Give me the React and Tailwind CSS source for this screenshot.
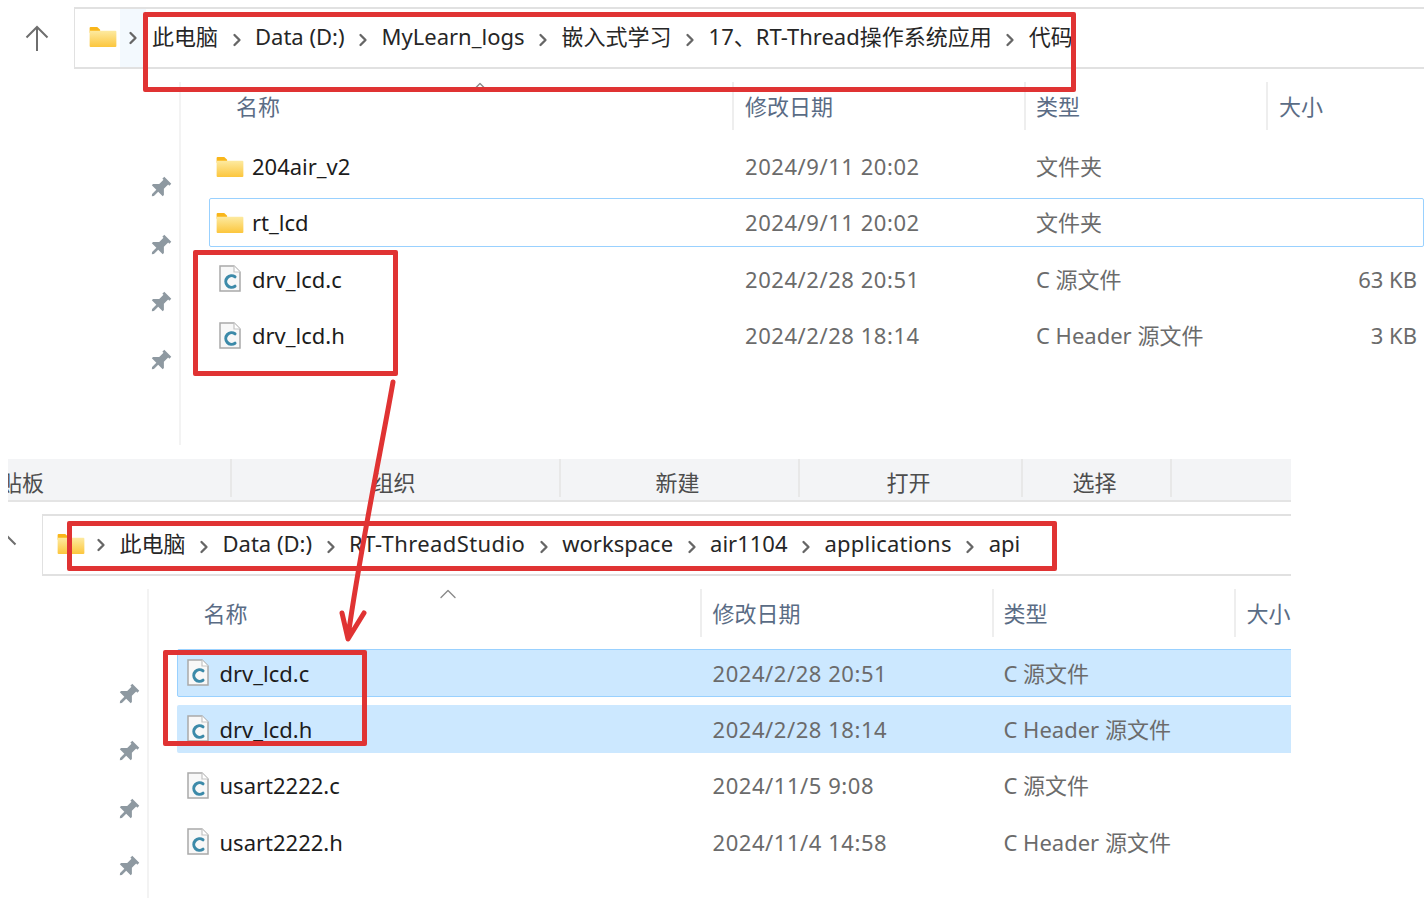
import { ChevronRight, ChevronUp } from "lucide-react";

const fontStack = `"Noto Sans", "Noto Sans CJK SC", sans-serif`;

const topCrumbs = ["此电脑", "Data (D:)", "MyLearn_logs", "嵌入式学习", "17、RT-Thread操作系统应用", "代码"];
const bottomCrumbs = ["此电脑", "Data (D:)", "RT-ThreadStudio", "workspace", "air1104", "applications", "api"];

const topRows = [
  { name: "204air_v2", date: "2024/9/11 20:02", type: "文件夹", kind: "folder" },
  { name: "rt_lcd", date: "2024/9/11 20:02", type: "文件夹", kind: "folder", focused: true },
  { name: "drv_lcd.c", date: "2024/2/28 20:51", type: "C 源文件", size: "63 KB", kind: "c" },
  { name: "drv_lcd.h", date: "2024/2/28 18:14", type: "C Header 源文件", size: "3 KB", kind: "c" },
];

const bottomRows = [
  { name: "drv_lcd.c", date: "2024/2/28 20:51", type: "C 源文件", kind: "c", selected: true, focused: true },
  { name: "drv_lcd.h", date: "2024/2/28 18:14", type: "C Header 源文件", kind: "c", selected: true },
  { name: "usart2222.c", date: "2024/11/5 9:08", type: "C 源文件", kind: "c" },
  { name: "usart2222.h", date: "2024/11/4 14:58", type: "C Header 源文件", kind: "c" },
];

function FolderIcon({ className }) {
  return (
    <svg className={className} viewBox="0 0 28 22" fill="none">
      <defs>
        <linearGradient id="folderFill" x1="0" y1="0" x2="0" y2="1">
          <stop offset="0" stopColor="#fdeaa0" />
          <stop offset="1" stopColor="#fcc63d" />
        </linearGradient>
      </defs>
      <path d="M0 2a1 1 0 011-1h7l3 3v3H0z" fill="#f9b61a" />
      <path d="M0 5h27a1 1 0 011 1v15a1 1 0 01-1 1H1a1 1 0 01-1-1z" fill="url(#folderFill)" />
    </svg>
  );
}

function CFileIcon() {
  return (
    <svg className="h-[27px] w-[22px] shrink-0" viewBox="0 0 22 27" fill="none">
      <path d="M1 1h14l6 6v19H1z" fill="#f8f8f8" stroke="#a9a9a9" strokeWidth="1.5" />
      <path d="M15 1v6h6" fill="#ffffff" stroke="#c4c4c4" strokeWidth="1.2" />
      <path d="M16 11.800a5.800 5.800 0 100 9.400" stroke="#3c8aa9" strokeWidth="3" strokeLinecap="round" />
    </svg>
  );
}

function PinIcon() {
  return (
    <svg className="h-[22px] w-[22px] overflow-visible" viewBox="0 0 20 20" fill="#8e99a1">
      <g transform="rotate(45 10 10)">
        <path d="M5.500 0h9v2.500H13V8l4 4v1.500h-5.800V19L10 20.500 8.800 19v-5.500H3V12l4-4V2.500H5.500z" />
      </g>
    </svg>
  );
}

function UpArrowIcon() {
  return (
    <svg className="h-[26px] w-6" viewBox="0 0 24 26" fill="none" stroke="#6e6e6e" strokeWidth="2">
      <path d="M12 2v24M1.500 12.500L12 2l10.500 10.500" />
    </svg>
  );
}

function Breadcrumbs({ crumbs }) {
  return (
    <div className="flex h-full items-center">
      {crumbs.map((crumb, i) => (
        <div key={crumb} className="flex items-center">
          {i > 0 && (
            <ChevronRight className="mx-[8.500px] mt-1 h-5 w-5 text-[#666666]" strokeWidth={2.8} />
          )}
          <span
            className={`mb-1 text-[#262626] ${crumb === "RT-ThreadStudio" ? "tracking-[0.4px]" : ""} ${
              crumb === "applications" ? "tracking-[0.2px]" : ""
            }`}
          >
            {crumb}
          </span>
        </div>
      ))}
    </div>
  );
}

function FileRow({ row }) {
  const tone = row.selected ? "bg-[#cce8ff]" : "";
  const edge = row.focused ? "border-[#99d1ff]" : "border-transparent";

  return (
    <div className={`flex h-[48.300px] items-center rounded-[2px] border ${edge} ${tone}`}>
      <div className="flex w-[535px] shrink-0 items-center">
        {row.kind === "folder" ? (
          <FolderIcon className="ml-[6px] h-[21px] w-[28px] shrink-0" />
        ) : (
          <div className="ml-[9px] w-[25px]">
            <CFileIcon />
          </div>
        )}
        <span className="ml-[8px] text-[#1c1c1c]">{row.name}</span>
      </div>
      <div className="w-[291px] shrink-0 tracking-[0.55px] text-[#6b6b6b]">{row.date}</div>
      <div className="flex-1 text-[#6b6b6b]">{row.type}</div>
      {row.size && <div className="pr-[6px] text-[#6b6b6b]">{row.size}</div>}
    </div>
  );
}

function ExplorerPane({ crumbs, rows, height, hovered }) {
  return (
    <div className={`w-[1424px] ${height}`}>
      <div className="flex h-[82px] items-start pt-[7px]">
        <div className="flex h-[62px] w-[74px] items-center justify-center">
          <UpArrowIcon />
        </div>
        <div className="flex h-[62px] flex-1 items-center border-y-2 border-l border-[#e1e1e1]">
          <FolderIcon className="mb-[3px] ml-[14px] h-[21px] w-[28px] shrink-0" />
          <div className={`ml-[3px] flex h-full w-[26px] items-center justify-center ${hovered ? "bg-[#f3f9fe]" : ""}`}>
            <ChevronRight className="h-5 w-5 text-[#666666]" strokeWidth={2.8} />
          </div>
          <div className="ml-[6px] h-full">
            <Breadcrumbs crumbs={crumbs} />
          </div>
        </div>
      </div>

      <div className="flex h-[calc(100%-82px)]">
        <div className="flex w-[181px] shrink-0 flex-col items-end gap-[35.600px] border-r-2 border-[#f3f3f3] pr-[8px] pt-[95px]">
          <PinIcon />
          <PinIcon />
          <PinIcon />
          <PinIcon />
        </div>

        <div className="flex-1">
          <div className="relative flex h-[48px] text-[#5a6c85]">
            <div className="flex w-[553px] items-center border-r-2 border-[#eeeeee] pl-[55px]">名称</div>
            <div className="flex w-[292px] items-center border-r-2 border-[#eeeeee] pl-[11px]">修改日期</div>
            <div className="flex w-[242px] items-center border-r-2 border-[#eeeeee] pl-[10px]">类型</div>
            <div className="flex flex-1 items-center pl-[11px]">大小</div>
            <ChevronUp className="absolute -top-[9px] left-[285px] h-7 w-7 text-[#8a8a8a]" strokeWidth={1.2} />
          </div>
          <div className="ml-[28px] mt-[12px] flex flex-col gap-2">
            {rows.map((row) => (
              <FileRow key={row.name} row={row} />
            ))}
          </div>
        </div>
      </div>
    </div>
  );
}

function Toolbar() {
  const cells = [
    { label: "组织", width: "w-[329px]" },
    { label: "新建", width: "w-[239px]" },
    { label: "打开", width: "w-[223px]" },
    { label: "选择", width: "w-[149px]" },
  ];

  return (
    <div className="h-[43px] border-b-2 border-[#e4e4e4] bg-[#f3f4f6] text-[#4d4d4d]">
      <div className="flex h-[38px]">
        <div className="flex w-[224px] items-center overflow-hidden border-r-2 border-[#e8e8e8] pt-2">
          <span className="-ml-[30px]">剪贴板</span>
        </div>
        {cells.map((cell) => (
          <div
            key={cell.label}
            className={`flex ${cell.width} items-center justify-center border-r-2 border-[#e8e8e8] pr-1 pt-2`}
          >
            {cell.label}
          </div>
        ))}
      </div>
    </div>
  );
}

function RedBox({ className }) {
  return <div className={`absolute rounded-[2px] border-[5px] border-[#e03333] ${className}`} />;
}

export default function App() {
  return (
    <div
      className="relative h-[898px] w-[1424px] overflow-hidden bg-white text-[22px] leading-none"
      style={{ fontFamily: fontStack }}
    >
      <ExplorerPane crumbs={topCrumbs} rows={topRows} height="h-[445px]" hovered />

      <div className="ml-2 mt-[14px] w-[1283px] overflow-hidden">
        <Toolbar />
        <div className="-ml-[40.500px] mt-[4.500px]">
          <ExplorerPane crumbs={bottomCrumbs} rows={bottomRows} height="h-[391px]" />
        </div>
      </div>

      <RedBox className="left-[143px] top-[12px] h-[80px] w-[933px]" />
      <RedBox className="left-[193px] top-[250px] h-[126px] w-[205px]" />
      <RedBox className="left-[67px] top-[521px] h-[50px] w-[990px]" />
      <RedBox className="left-[163px] top-[650px] h-[96px] w-[204px]" />

      <svg className="absolute left-[330px] top-[375px] h-[275px] w-[75px]" viewBox="0 0 75 275" fill="none">
        <path
          d="M63 7C52 70 30 175 18 262M12 238l6 26 16-26"
          stroke="#e03333"
          strokeWidth="5"
          strokeLinecap="round"
          strokeLinejoin="round"
        />
      </svg>
    </div>
  );
}
